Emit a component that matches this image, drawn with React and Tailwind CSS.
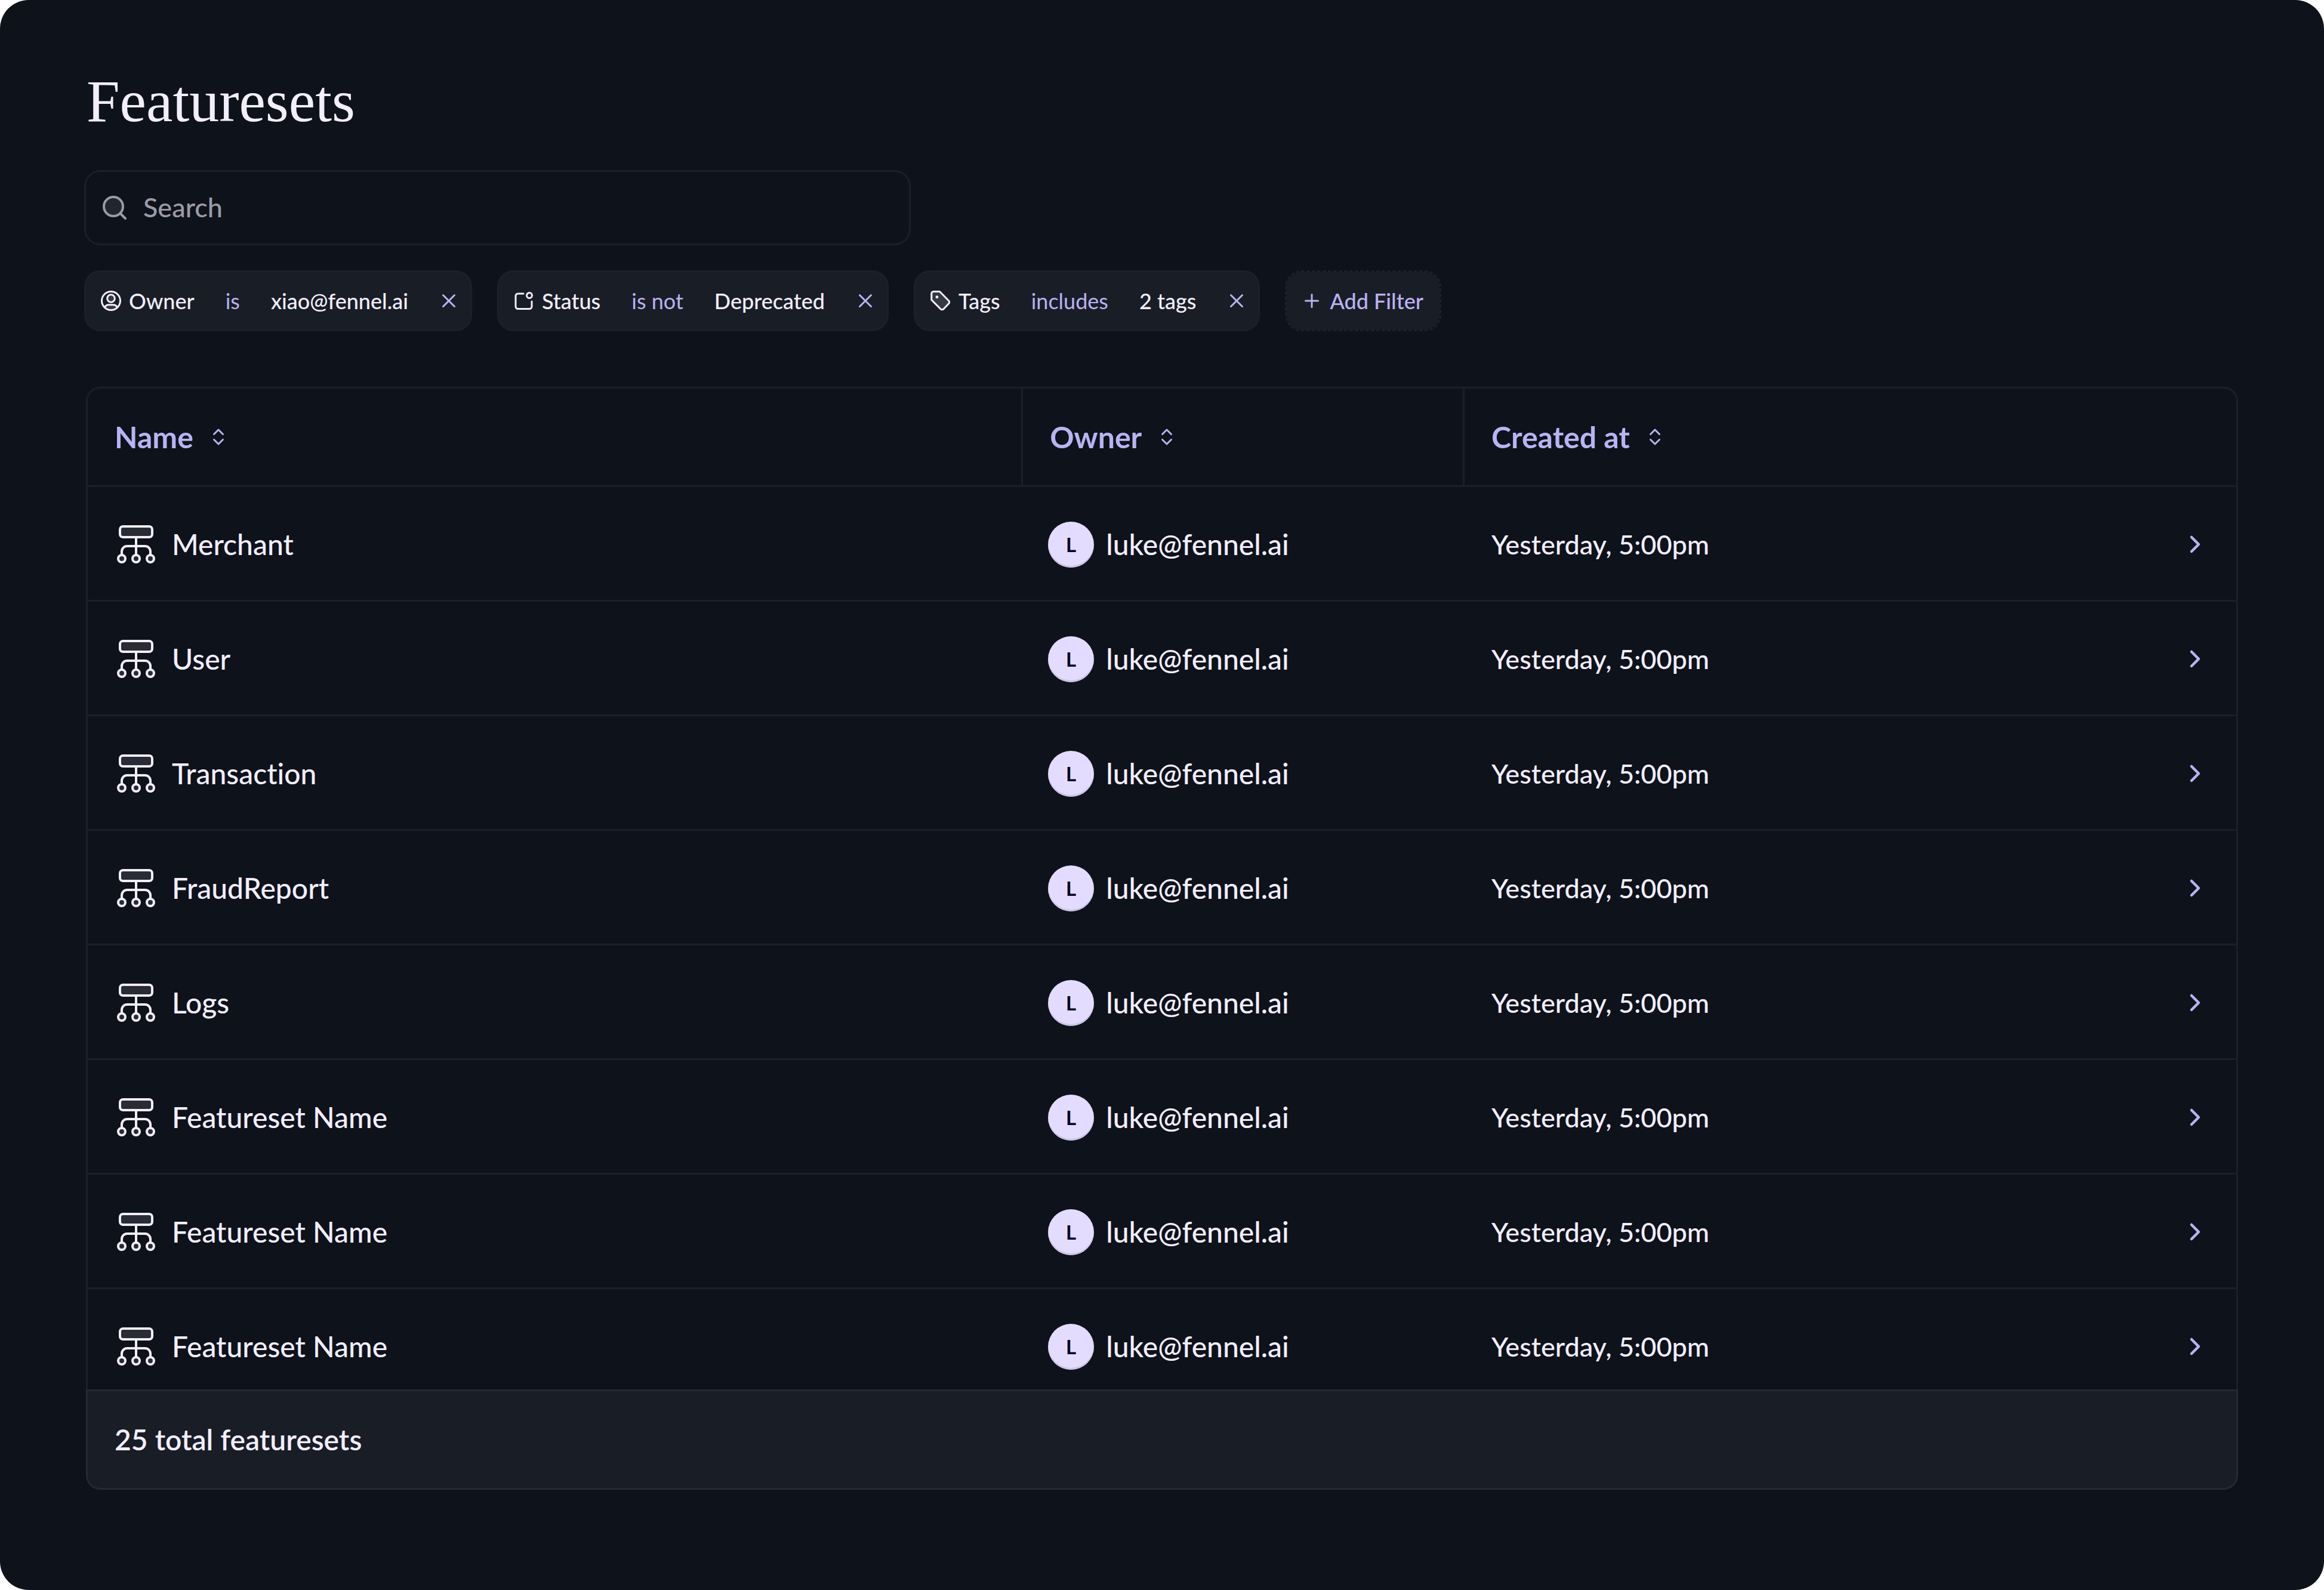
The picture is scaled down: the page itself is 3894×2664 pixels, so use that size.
const rows = ["Merchant", "User", "Transaction", "FraudReport", "Logs", "Featureset Name", "Featureset Name", "Featureset Name"];

function SearchIcon() {
  return (
    <svg viewBox="0 0 48 48" className="size-12 shrink-0" fill="none" stroke="currentColor" strokeWidth="4" strokeLinecap="round" aria-hidden="true">
      <circle cx="22" cy="22" r="16" fill="#22252e" />
      <path d="m34 34 8 8" />
    </svg>
  );
}

function OwnerIcon() {
  return (
    <svg viewBox="0 0 36 36" className="size-9 shrink-0" fill="none" stroke="currentColor" strokeWidth="3" aria-hidden="true">
      <path d="M8 29c1.4-3 3.8-4.2 6.4-4.2h7.2c2.6 0 5 1.2 6.4 4.2-5.5 6-14.5 6-20 0z" fill="#373844" stroke="none" />
      <circle cx="18" cy="18" r="15.5" />
      <circle cx="18" cy="14" r="6.3" fill="#373844" />
      <path d="M7.5 29c1.5-3 4-4.2 6.6-4.2h7.8c2.6 0 5.1 1.2 6.6 4.2" />
    </svg>
  );
}

function StatusIcon() {
  return (
    <svg viewBox="0 0 36 36" className="size-9 shrink-0" fill="none" stroke="currentColor" strokeWidth="3" strokeLinecap="round" aria-hidden="true">
      <path d="M17 6H8a4 4 0 0 0-4 4v17.5a4 4 0 0 0 4 4h19a4 4 0 0 0 4-4V19" />
      <circle cx="27" cy="9" r="4.5" />
    </svg>
  );
}

function TagIcon() {
  return (
    <svg viewBox="0 0 36 36" className="size-9 shrink-0" fill="#373844" stroke="currentColor" strokeWidth="3" strokeLinejoin="round" aria-hidden="true">
      <path d="M6 2.5h10.5l15.1 15.3a3.5 3.5 0 0 1 0 5l-8.6 8.9a3.5 3.5 0 0 1-5 0L2.8 16.5V6A3.3 3.3 0 0 1 6 2.5z" />
      <circle cx="12" cy="11.7" r="2.4" fill="currentColor" stroke="none" />
    </svg>
  );
}

function CloseIcon() {
  return (
    <svg viewBox="0 0 36 36" className="size-9" fill="none" stroke="currentColor" strokeWidth="3" strokeLinecap="round" aria-hidden="true">
      <path d="m8.5 8.5 19 19m0-19-19 19" />
    </svg>
  );
}

function PlusIcon() {
  return (
    <svg viewBox="0 0 36 36" className="size-9" fill="none" stroke="currentColor" strokeWidth="3" strokeLinecap="round" aria-hidden="true">
      <path d="M18 7.5v21M7.5 18h21" />
    </svg>
  );
}

function SortIcon() {
  return (
    <svg viewBox="0 0 36 36" className="size-9" fill="none" stroke="currentColor" strokeWidth="3" strokeLinecap="round" strokeLinejoin="round" aria-hidden="true">
      <path d="m10.5 13.5 7.5-7.5 7.5 7.5M10.5 22.5l7.5 7.5 7.5-7.5" />
    </svg>
  );
}

function ChevronIcon() {
  return (
    <svg viewBox="0 0 48 48" className="size-12" fill="none" stroke="currentColor" strokeWidth="4.5" strokeLinecap="round" strokeLinejoin="round" aria-hidden="true">
      <path d="m18 36 12-12-12-12" />
    </svg>
  );
}

function FeaturesetIcon() {
  return (
    <svg viewBox="0 0 72 72" className="size-[72px] shrink-0" fill="none" stroke="currentColor" strokeWidth="4" aria-hidden="true">
      <path d="M36 25v29M12 54V48a9 9 0 0 1 9-9h30a9 9 0 0 1 9 9v6" />
      <rect x="9" y="6" width="54" height="18" rx="5" fill="#292c36" />
      <circle cx="12" cy="60" r="6" fill="#292c36" />
      <circle cx="36" cy="60" r="6" fill="#292c36" />
      <circle cx="60" cy="60" r="6" fill="#292c36" />
    </svg>
  );
}

const filters = [
  { icon: <OwnerIcon />, field: "Owner", op: "is", value: "xiao@fennel.ai" },
  { icon: <StatusIcon />, field: "Status", op: "is not", value: "Deprecated" },
  { icon: <TagIcon />, field: "Tags", op: "includes", value: "2 tags" },
];

function FilterChip({ icon, field, op, value }) {
  return (
    <li className="flex h-[102px] items-center rounded-[27px] border-3 border-[#1c202a] bg-[#191d25] pr-[18px] pl-6">
      {icon}
      <span className="ml-3">{field}</span>
      <span className="ml-[52px] font-normal text-[#b9b2f3]">{op}</span>
      <span className="ml-[52px]">{value}</span>
      <button type="button" aria-label={`Remove ${field} filter`} className="ml-[50px] text-[#b9b2f3]">
        <CloseIcon />
      </button>
    </li>
  );
}

function SortHeader({ children, className }) {
  return (
    <th scope="col" className={`border-b-3 border-[#1b1f28] px-[45px] text-left ${className}`}>
      <button type="button" className="flex items-center gap-6 text-[50px] font-bold text-[#b9b2f3]">
        {children}
        <SortIcon />
      </button>
    </th>
  );
}

export default function App() {
  return (
    <main className="min-h-screen rounded-[48px] bg-[#0e121a] px-[141px] pt-[110px] pb-[168px] font-[Lato,sans-serif] font-medium text-[#f2eeff] [font-variant-ligatures:no-common-ligatures]">
      <h1 className="pl-1 font-['Liberation_Serif',serif] text-[100px] leading-[120px] font-normal">Featuresets</h1>

      <label className="mt-[55px] flex h-[126px] w-[1385px] max-w-full items-center gap-6 rounded-[27px] border-3 border-[#1b1f28] px-6 text-[#9b9ba8]">
        <SearchIcon />
        <input type="search" aria-label="Search" placeholder="Search" className="min-w-0 flex-1 bg-transparent text-[45px] outline-none placeholder:text-[#9b9ba8]" />
      </label>

      <ul className="mt-[42px] flex flex-wrap gap-[42px] text-4xl whitespace-nowrap">
        {filters.map((f) => (
          <FilterChip key={f.field} {...f} />
        ))}
        <li>
          <button type="button" className="flex h-[102px] items-center gap-3 rounded-[27px] border-3 border-dashed border-[#1c202a] bg-[#191d25] bg-clip-padding pr-[27px] pl-6 text-[#b9b2f3]">
            <PlusIcon />
            Add Filter
          </button>
        </li>
      </ul>

      <section className="mx-[3px] mt-[93px] text-5xl">
        <div className="rounded-t-3xl border-x-3 border-t-3 border-[#1b1f28]">
          <table className="w-full table-fixed border-separate border-spacing-0">
            <thead>
              <tr className="h-[165px]">
                <SortHeader className="w-[43.45%]">Name</SortHeader>
                <SortHeader className="w-[20.55%] border-l-3">Owner</SortHeader>
                <SortHeader className="border-l-3">Created at</SortHeader>
              </tr>
            </thead>
            <tbody>
              {rows.map((name, i) => (
                <tr key={i} className="h-[192px]">
                  <td className="border-b-3 border-[#1b1f28] px-[45px] pt-[3px]">
                    <div className="flex items-center gap-6">
                      <FeaturesetIcon />
                      {name}
                    </div>
                  </td>
                  <td className="border-b-3 border-[#1b1f28] px-[45px] pt-[3px]">
                    <div className="flex items-center gap-5">
                      <span className="flex size-[77px] shrink-0 items-center justify-center rounded-full bg-[#e4dcff] text-[33px] font-bold text-[#050522] shadow-[inset_0_-3px_0_#cbc4e6]">L</span>
                      luke@fennel.ai
                    </div>
                  </td>
                  <td className="border-b-3 border-[#1b1f28] pt-[3px] pr-[45px] pl-12">
                    <div className="flex items-center justify-between text-[45px]">
                      Yesterday, 5:00pm
                      <a href="#featureset" aria-label={`Open ${name}`} className="text-[#b9b2f3]">
                        <ChevronIcon />
                      </a>
                    </div>
                  </td>
                </tr>
              ))}
            </tbody>
          </table>
        </div>
        <footer className="relative -mt-6 flex h-[168px] items-center rounded-b-3xl border-3 border-[#252932] bg-[#191d25] px-[45px] font-semibold">
          25 total featuresets
        </footer>
      </section>
    </main>
  );
}
